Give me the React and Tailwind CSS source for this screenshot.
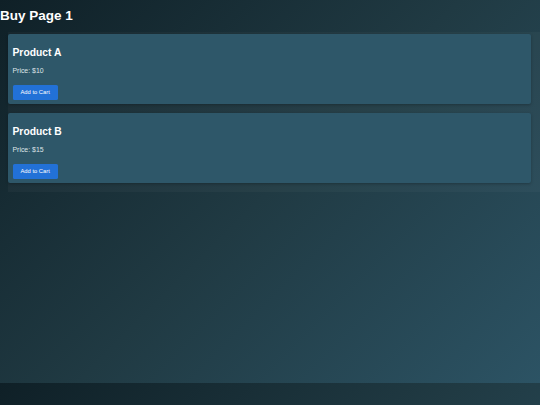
import React from "react";

const products = [
  { name: "Product A", price: 10 },
  { name: "Product B", price: 15 },
];

const ProductCard = ({ product }) => (
  <div className="h-[70px] w-[523px] rounded-[2px] bg-[#2e5769] pl-[4.5px] pr-1 pt-[13px] pb-[4px] shadow-[0_1px_3px_rgba(0,0,0,0.25)]">
    <h2 className="text-[10.3px] font-bold leading-[11px] text-white">{product.name}</h2>
    <p className="mt-[9px] text-[6.9px] leading-[7.4px] text-[#dfe5e8]">Price: ${product.price}</p>
    <button className="mt-[11px] h-[14.7px] rounded-[1.6px] bg-[#2271d7] px-[8px] text-[5.8px] leading-[14.7px] text-white">
      Add to Cart
    </button>
  </div>
);

export default function App() {
  return (
    <div
      className="flex h-[405px] w-[540px] flex-col overflow-hidden bg-[linear-gradient(135deg,#0f2027,#203a43,#2c5364)] bg-[length:540px_383px] bg-repeat"
      style={{ fontFamily: '"Liberation Sans", Arial, sans-serif' }}
    >
      <h1 className="mt-[9.3px] text-[13.5px] font-bold leading-[14.7px] text-white">Buy Page 1</h1>

      <div className="ml-2 mt-[8px] flex flex-col gap-[9px] bg-white/[0.03] pt-[2px] pb-[9px]">
        {products.map((p) => (
          <ProductCard key={p.name} product={p} />
        ))}
      </div>
    </div>
  );
}
